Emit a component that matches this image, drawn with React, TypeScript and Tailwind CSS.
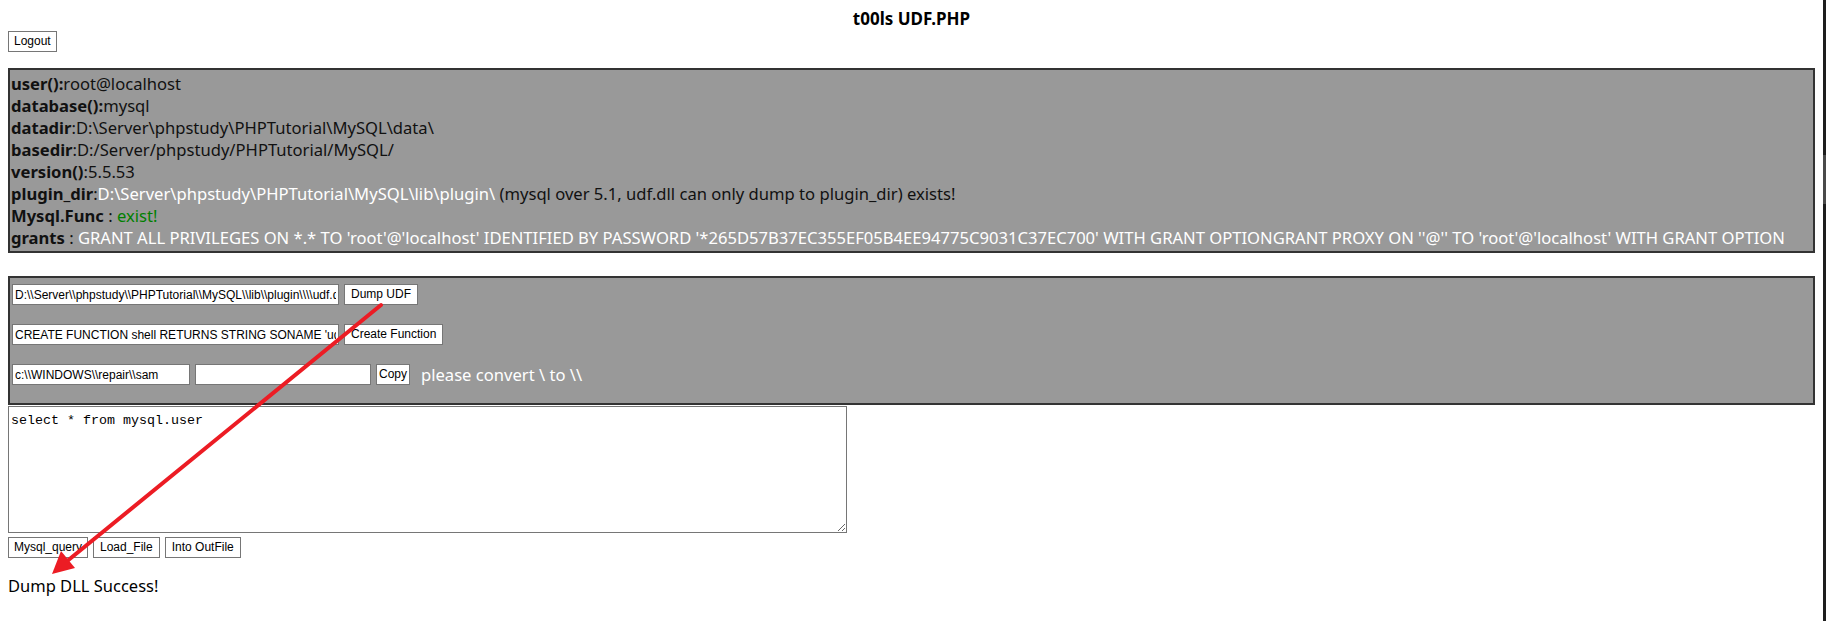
import type { ReactNode } from 'react'

// Страница «t00ls UDF.PHP»: шапка, блок сведений о сервере, формы дампа и SQL-запроса.

const body = "font-['Noto_Sans',sans-serif]"
const ctrl = "font-['Liberation_Sans',Arial,sans-serif] text-[12px] leading-[17px] text-black"

function Btn({ children, className = 'px-[6px]' }: { children: ReactNode; className?: string }) {
  return (
    <button
      type="button"
      className={`h-[21px] shrink-0 whitespace-nowrap border border-[#767676] bg-white ${ctrl} ${className}`}
    >
      {children}
    </button>
  )
}

function Field({ value, className = '' }: { value: string; className?: string }) {
  return (
    <input
      type="text"
      readOnly
      defaultValue={value}
      className={`h-[21px] shrink-0 border border-[#767676] bg-white px-[2px] outline-none ${ctrl} ${className}`}
    />
  )
}

function Line({ label, children }: { label: string; children: ReactNode }) {
  return (
    <div className="h-[22px] whitespace-nowrap leading-[22px]">
      <b className="font-bold text-[#111]">{label}</b>
      {children}
    </div>
  )
}

export default function App() {
  return (
    <div className="flex h-[621px] w-[1826px] overflow-hidden bg-white">
      <main className={`relative w-[1823px] shrink-0 px-[8px] text-[#111] ${body}`}>
        <h3 className="mt-[8px] h-[22px] text-center text-[17px] font-bold leading-[22px] text-black">
          t00ls UDF.PHP
        </h3>

        <div className="mt-[1px] flex">
          <Btn className="px-[5px]">Logout</Btn>
        </div>

        <section className="mt-[16px] h-[185px] border-2 border-[#333] bg-[#999] px-[1px] pt-[3px] text-[16.6px]">
          <Line label="user():">root@localhost</Line>
          <Line label="database():">mysql</Line>
          <Line label="datadir">:D:\Server\phpstudy\PHPTutorial\MySQL\data\</Line>
          <Line label="basedir">:D:/Server/phpstudy/PHPTutorial/MySQL/</Line>
          <Line label="version()">:5.5.53</Line>
          <Line label="plugin_dir">
            :<span className="text-white">D:\Server\phpstudy\PHPTutorial\MySQL\lib\plugin\</span> (mysql over 5.1,
            udf.dll can only dump to plugin_dir) exists!
          </Line>
          <Line label="Mysql.Func">
            {' '}: <span className="text-[#008000]">exist!</span>
          </Line>
          <Line label="grants">
            {' '}:{' '}
            <span className="text-white">
              GRANT ALL PRIVILEGES ON *.* TO 'root'@'localhost' IDENTIFIED BY PASSWORD
              '*265D57B37EC355EF05B4EE94775C9031C37EC700' WITH GRANT OPTIONGRANT PROXY ON ''@'' TO
              'root'@'localhost' WITH GRANT OPTION
            </span>
          </Line>
        </section>

        <section className="mt-[23px] flex h-[129px] flex-col gap-[19px] border-2 border-[#333] bg-[#999] pl-[2px] pt-[6px]">
          <div className="flex items-center gap-[5px]">
            <Field className="w-[327px]" value="D:\\Server\\phpstudy\\PHPTutorial\\MySQL\\lib\\plugin\\\\udf.dll" />
            <Btn>Dump UDF</Btn>
          </div>
          <div className="flex items-center gap-[5px]">
            <Field className="w-[327px]" value="CREATE FUNCTION shell RETURNS STRING SONAME 'udf.dll'" />
            <Btn>Create Function</Btn>
          </div>
          <div className="flex items-center gap-[5px]">
            <Field className="w-[178px]" value="c:\\WINDOWS\\repair\\sam" />
            <Field className="w-[176px]" value="" />
            <Btn className="px-[2px]">Copy</Btn>
            <span className="ml-[6px] text-[16.6px] leading-[21px] text-white">please convert \ to \\</span>
          </div>
        </section>

        <textarea
          readOnly
          defaultValue="select * from mysql.user"
          className="mt-[1px] block h-[127px] w-[839px] resize border border-[#767676] bg-white px-[2px] pb-[3px] pt-[6px] font-['Liberation_Mono',monospace] text-[13.33px] leading-[16px] text-black outline-none"
        />

        <div className="mt-[4px] flex gap-[5px]">
          <Btn className="w-[80px] overflow-hidden pl-[5px] text-left">Mysql_query</Btn>
          <Btn>Load_File</Btn>
          <Btn>Into OutFile</Btn>
        </div>

        <p className="mt-[17px] text-[16.5px] leading-[22px] text-black">Dump DLL Success!</p>

        {/* красная стрелка-пометка поверх страницы */}
        <svg className="pointer-events-none absolute left-0 top-0" width="1823" height="621">
          <line x1="381" y1="305" x2="66" y2="562" stroke="#ec1c24" strokeWidth="4" strokeLinecap="round" />
          <polygon points="52,574 61,551 75,568" fill="#ec1c24" />
        </svg>
      </main>
      <aside className="flex h-full w-[3px] flex-col bg-[#1e1e1e]">
        <div className="mt-[155px] h-[49px] bg-[#4a4a4a]" />
      </aside>
    </div>
  )
}
